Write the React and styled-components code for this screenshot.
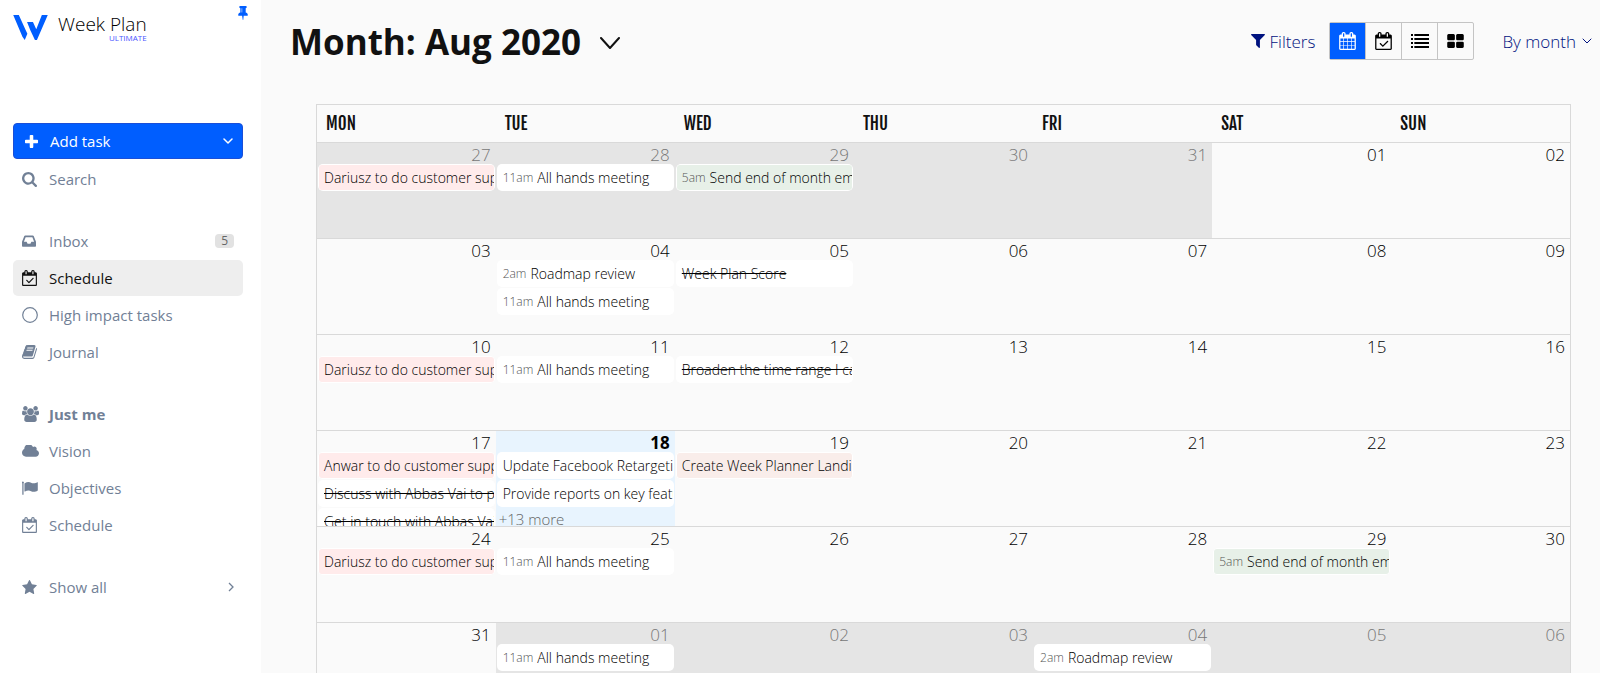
import React from "react";
import styled, { createGlobalStyle, css } from "styled-components";

const GlobalStyle = createGlobalStyle`
  *, *::before, *::after { box-sizing: border-box; }
  html, body { margin: 0; padding: 0; }
  body {
    background: #fafafa;
    color: #111;
    font-family: "Open Sans", "Noto Sans", sans-serif;
    font-size: 15px;
    font-weight: 400;
  }
  button, select { font: inherit; color: inherit; }
`;

/* ---------- icons ---------- */

const glyphs = {
  plus: { box: "192 128 1408 1408", d: "M1600 736v192q0 40-28 68t-68 28h-416v416q0 40-28 68t-68 28h-192q-40 0-68-28t-28-68v-416h-416q-40 0-68-28t-28-68v-192q0-40 28-68t68-28h416v-416q0-40 28-68t68-28h192q40 0 68 28t28 68v416h416q40 0 68 28t28 68z" },
  search: { box: "64 128 1664 1664", d: "M1216 832q0-185-131.5-316.5t-316.5-131.5-316.5 131.5-131.5 316.5 131.5 316.5 316.5 131.5 316.5-131.5 131.5-316.5zm512 832q0 52-38 90t-90 38q-54 0-90-38l-343-342q-179 124-399 124-143 0-273.5-55.5t-225-150-150-225-55.5-273.5 55.5-273.5 150-225 225-150 273.5-55.5 273.5 55.5 225 150 150 225 55.5 273.5q0 220-124 399l343 343q37 37 37 90z" },
  blocks: { box: "64 128 1664 1408", d: "M832 1024v384q0 52-38 90t-90 38h-512q-52 0-90-38t-38-90v-384q0-52 38-90t90-38h512q52 0 90 38t38 90zm0-768v384q0 52-38 90t-90 38h-512q-52 0-90-38t-38-90v-384q0-52 38-90t90-38h512q52 0 90 38t38 90zm896 768v384q0 52-38 90t-90 38h-512q-52 0-90-38t-38-90v-384q0-52 38-90t90-38h512q52 0 90 38t38 90zm0-768v384q0 52-38 90t-90 38h-512q-52 0-90-38t-38-90v-384q0-52 38-90t90-38h512q52 0 90 38t38 90z" },
  star: { box: "64 32 1664 1588", d: "M1728 647q0 22-26 48l-363 354 86 500q1 7 1 20 0 21-10.5 35.5t-30.5 14.5q-19 0-40-12l-449-236-449 236q-22 12-40 12-21 0-31.5-14.5t-10.5-35.5q0-6 2-20l86-500-364-354q-25-27-25-48 0-37 56-46l502-73 225-455q19-41 49-41t49 41l225 455 502 73q56 9 56 46z" },
  filter: { box: "192 256 1408 1408", d: "M1595 295q17 41-14 70l-493 493v742q0 42-39 59-13 5-25 5-27 0-45-19l-256-256q-19-19-19-45v-486l-493-493q-31-29-14-70 17-39 59-39h1280q42 0 59 39z" },
  pin: { box: "320 128 1152 1664", d: "M800 864v-448q0-14-9-23t-23-9-23 9-9 23v448q0 14 9 23t23 9 23-9 9-23zm672 352q0 26-19 45t-45 19h-429l-51 483q-2 12-10.5 20.5t-20.5 8.5h-1q-27 0-32-27l-76-485h-404q-26 0-45-19t-19-45q0-123 78.5-221.5t177.5-98.5v-512q-52 0-90-38t-38-90 38-90 90-38h640q52 0 90 38t38 90-38 90-90 38v512q99 0 177.5 98.5t78.5 221.5z" },
  cloud: { box: "64 256 1920 1280", d: "M1984 1152q0 159-112.5 271.5t-271.5 112.5h-1088q-185 0-316.5-131.5t-131.5-316.5q0-132 71-241.5t187-163.5q-2-28-2-43 0-212 150-362t362-150q158 0 286.5 88t187.5 230q70-62 166-62 106 0 181 75t75 181q0 75-41 138 129 30 213 134.5t84 239.5z" },
  group: { box: "64 0 1920 1792", d: "M657 896q-162 5-265 128h-134q-82 0-138-40.5t-56-118.5q0-353 124-353 6 0 43.5 21t97.5 42.5 119 21.5q67 0 133-23-5 37-5 66 0 159 90 256zm1071 637q0 120-73 189.5t-194 69.5h-874q-121 0-194-69.5t-73-189.5q0-53 3.5-103.5t14-109 26.5-108.5 43-97.5 62-81 85.5-53.5 111.5-20q10 0 43 21.5t73 48 107 48 135 21.5 135-21.5 107-48 73-48 43-21.5q61 0 111.5 20t85.5 53.5 62 81 43 97.5 26.5 108.5 14 109 3.5 103.5zm-1024-1277q0 106-75 181t-181 75-181-75-75-181 75-181 181-75 181 75 75 181zm704 384q0 159-112.5 271.5t-271.5 112.5-271.5-112.5-112.5-271.5 112.5-271.5 271.5-112.5 271.5 112.5 112.5 271.5zm576 225q0 78-56 118.5t-138 40.5h-134q-103-123-265-128 90-97 90-256 0-29-5-66 66 23 133 23 59 0 119-21.5t97.5-42.5 43.5-21q124 0 124 353zm-128-609q0 106-75 181t-181 75-181-75-75-181 75-181 181-75 181 75 75 181z" },
  calendar: { box: "64 0 1664 1792", d: "M192 1664h288v-288h-288v288zm352 0h320v-288h-320v288zm-352-352h288v-320h-288v320zm352 0h320v-320h-320v320zm-352-384h288v-288h-288v288zm736 736h320v-288h-320v288zm-384-736h320v-288h-320v288zm768 736h288v-288h-288v288zm-384-352h320v-320h-320v320zm-352-864v-288q0-13-9.5-22.5t-22.5-9.5h-64q-13 0-22.5 9.5t-9.5 22.5v288q0 13 9.5 22.5t22.5 9.5h64q13 0 22.5-9.5t9.5-22.5zm736 864h288v-320h-288v320zm-384-384h320v-288h-320v288zm384 0h288v-288h-288v288zm32-480v-288q0-13-9.5-22.5t-22.5-9.5h-64q-13 0-22.5 9.5t-9.5 22.5v288q0 13 9.5 22.5t22.5 9.5h64q13 0 22.5-9.5t9.5-22.5zm384-64v1280q0 52-38 90t-90 38h-1408q-52 0-90-38t-38-90v-1280q0-52 38-90t90-38h128v-96q0-66 47-113t113-47h64q66 0 113 47t47 113v96h384v-96q0-66 47-113t113-47h64q66 0 113 47t47 113v96h128q52 0 90 38t38 90z" },
  schedule: { box: "0 0 1664 1792", d: "M1303 964l-512 512q-10 9-23 9t-23-9l-288-288q-9-10-9-23t9-22l46-46q9-9 22-9t23 9l220 220 444-444q10-9 23-9t22 9l46 46q9 9 9 22t-9 23zm-1175 700h1408v-1024h-1408v1024zm384-1216v-288q0-14-9-23t-23-9h-64q-14 0-23 9t-9 23v288q0 14 9 23t23 9h64q14 0 23-9t9-23zm768 0v-288q0-14-9-23t-23-9h-64q-14 0-23 9t-9 23v288q0 14 9 23t23 9h64q14 0 23-9t9-23zm384-64v1280q0 52-38 90t-90 38h-1408q-52 0-90-38t-38-90v-1280q0-52 38-90t90-38h128v-96q0-66 47-113t113-47h64q66 0 113 47t47 113v96h384v-96q0-66 47-113t113-47h64q66 0 113 47t47 113v96h128q52 0 90 38t38 90z" },
  book: { box: "64 128 1670 1536", d: "M1703 478q40 57 18 129l-275 906q-19 64-76.5 107.5t-122.5 43.5h-923q-77 0-148.5-53.5t-99.5-131.5q-24-67-2-127 0-4 3-27t4-37q1-8-3-21.5t-3-19.5q2-11 8-21t16.5-23.5 16.5-23.5q23-38 45-91.5t30-91.5q3-10 .5-30t-.5-28q3-11 17-28t17-23q21-36 42-92t25-90q1-9-2.5-32t.5-28q4-13 22-30.5t22-22.5q19-26 42.5-84.5t27.5-96.5q1-8-3-25.5t-2-26.5q2-8 9-18t18-23 17-21q8-12 16.5-30.5t15-35 16-36 19.5-32 26.5-23.5 36-11.5 47.5 5.500l-1 3q38-9 51-9h761q74 0 114 56t18 130l-274 906q-36 119-71.500 153.500t-128.500 34.500h-869q-27 0-38 15-11 16-1 43 24 70 144 70h923q29 0 56-15.500t35-41.500l300-987q7-22 5-57 38 15 59 43zm-1064 2q-4 13 2 22.500t20 9.500h608q13 0 25.500-9.500t16.500-22.500l21-64q4-13-2-22.500t-20-9.500h-608q-13 0-25.500 9.500t-16.500 22.500zm-83 256q-4 13 2 22.500t20 9.500h608q13 0 25.500-9.500t16.500-22.500l21-64q4-13-2-22.500t-20-9.500h-608q-13 0-25.500 9.500t-16.500 22.500z" },
  inbox: { box: "0 0 28 24", d: "M6.5 1h15a2 2 0 0 1 1.9 1.2L28 13.5V22a1.6 1.6 0 0 1-1.6 1.6H1.6A1.6 1.6 0 0 1 0 22v-8.500L4.600 2.200A2 2 0 0 1 6.500 1zM7.300 4.500L3.800 13.500h5.400l2 4h5.600l2-4h5.400L20.700 4.500z" },
  flag: { box: "0 0 32 28", d: "M1.500 0.800a2.200 2.200 0 0 1 1.600 3.800V27a.7.700 0 0 1-.7.700H1.300a.7.700 0 0 1-.7-.7V4.600A2.200 2.200 0 0 1 1.500.800zM5.500 4.600C8 3 10.500 2 13 2c4 0 6.500 2.700 10 2.700 3 0 5.500-1.200 7.500-2.300.6-.3 1.100 0 1.100.700v15.400c0 .500-.200.800-.700 1-2 1.100-4.600 2-7.400 2-4.500 0-6.300-2.700-10.500-2.700-2.500 0-4.800 1-7 2.200-.6.300-1.100 0-1.100-.600V5.600c0-.500.200-.8.600-1z" },
  list: { box: "0 0 54 42", d: "M0 0h6v6H0zM10 0h44v6H10zM0 12h6v6H0zM10 12h44v6H10zM0 24h6v6H0zM10 24h44v6H10zM0 36h6v6H0zM10 36h44v6H10z" },
};

const Svg = styled.svg`
  display: block;
  flex: none;
  fill: currentColor;
`;

const Glyph = ({ name, w, h }) => (
  <Svg viewBox={glyphs[name].box} width={w} height={h} aria-hidden="true">
    <path d={glyphs[name].d} fillRule={name === "inbox" ? "evenodd" : "nonzero"} />
  </Svg>
);

const Chevron = ({ w, h, thick = 1.5 }) => (
  <Svg viewBox={`0 0 ${w} ${h}`} width={w} height={h} aria-hidden="true">
    <path
      d={`M1 1L${w / 2} ${h - 1}L${w - 1} 1`}
      fill="none"
      stroke="currentColor"
      strokeWidth={thick}
      strokeLinecap="round"
      strokeLinejoin="round"
    />
  </Svg>
);

const ChevronRight = () => (
  <Svg viewBox="0 0 6 10" width="6" height="10" aria-hidden="true">
    <path d="M1 1l4 4-4 4" fill="none" stroke="currentColor" strokeWidth="1.300" />
  </Svg>
);

const Ring = () => (
  <Svg viewBox="0 0 16 16" width="16" height="16" aria-hidden="true">
    <circle cx="8" cy="8" r="7.300" fill="none" stroke="currentColor" strokeWidth="1.200" />
  </Svg>
);

const LogoMark = () => (
  <Svg viewBox="0 0 105 76" width="35" height="25" aria-hidden="true">
    <path
      fill="#005eff"
      d="M0 0H17L37 44L43 57L35 76L28 66ZM42 21H60L70 43L87 0H105L72 76H66L52 46Z"
    />
  </Svg>
);

/* ---------- layout ---------- */

const Page = styled.div`
  display: flex;
  height: 100vh;
  overflow: hidden;
`;

const Sidebar = styled.aside`
  flex: 0 0 261px;
  padding: 0 18px 0 13px;
  background: #fff;
  color: #718096;
`;

const Brand = styled.div`
  display: flex;
  height: 123px;
`;

const BrandLink = styled.a`
  display: flex;
  align-items: flex-start;
  gap: 10px;
  padding-top: 15px;
  color: #000;
  text-decoration: none;
`;

const BrandText = styled.span`
  display: flex;
  flex-direction: column;
  align-items: flex-end;
  font-size: 19px;
  font-weight: 300;
  line-height: 18px;
`;

const Plan = styled.small`
  color: #4a55ff;
  font-size: 8px;
  font-weight: 400;
  line-height: 9px;
`;

const PinButton = styled.button`
  align-self: flex-start;
  margin: 6px -5px 0 auto;
  padding: 0;
  border: 0;
  background: none;
  color: #005eff;
`;

const AddTask = styled.button`
  display: flex;
  align-items: center;
  gap: 12px;
  width: 100%;
  height: 36px;
  margin-bottom: 2px;
  padding: 0 9px 0 11px;
  border: 1px solid #1a4fd8;
  border-radius: 4px;
  background: #005eff;
  color: #fff;
  text-align: left;
`;

const Grow = styled.span`
  flex: 1;
`;

const NavList = styled.ul`
  display: flex;
  flex-direction: column;
  gap: 1px;
  margin: 0 0 26px;
  padding: 0;
  list-style: none;
`;

const NavLink = styled.a`
  display: flex;
  align-items: center;
  height: 36px;
  padding: 0 9px;
  border-radius: 5px;
  color: inherit;
  text-decoration: none;
  ${(p) => p.$active && css`
    background: #eee;
    color: #111;
  `}
  ${(p) => p.$strong && css`
    font-weight: 700;
  `}
`;

const NavIcon = styled.span`
  display: flex;
  flex: 0 0 27px;
`;

const Count = styled.span`
  padding: 0 6px;
  border-radius: 4px;
  background: #e2e2e2;
  color: #666;
  font-size: 12px;
  line-height: 14px;
`;

const Main = styled.main`
  flex: 1;
  min-width: 0;
`;

const TopBar = styled.header`
  display: flex;
  align-items: center;
  height: 82px;
  padding: 0 8px 0 29px;
`;

const Title = styled.h1`
  margin: 0;
  padding-top: 2px;
  font-size: 35px;
  line-height: 48px;
  font-weight: 700;
`;

const PlainButton = styled.button`
  display: flex;
  align-items: center;
  gap: ${(p) => p.$gap || 0}px;
  padding: 0;
  border: 0;
  background: none;
  color: ${(p) => p.$color || "#111"};
  font-size: 17px;
  font-weight: 300;
`;

const TitleToggle = styled(PlainButton)`
  margin: 3px auto 0 19px;
`;

const ViewSwitch = styled.div`
  display: flex;
  margin: 0 28px 0 14px;
  border: 1px solid #c4c4c4;
  border-radius: 2px;
`;

const ViewButton = styled.button`
  display: flex;
  align-items: center;
  justify-content: center;
  width: 36px;
  height: 36px;
  padding: 0;
  border: 0;
  border-left: 1px solid #c4c4c4;
  background: ${(p) => (p.$active ? "#005eff" : "transparent")};
  color: ${(p) => (p.$active ? "#fff" : "#000")};
  &:first-child {
    width: 35px;
    border-left: 0;
  }
`;

/* ---------- calendar ---------- */

const CalendarWrap = styled.div`
  padding: 22px 29px 0 55px;
`;

const Calendar = styled.table`
  width: 100%;
  table-layout: fixed;
  border-collapse: collapse;
  border: 1px solid #d9d9d9;
`;

const Weekday = styled.th`
  height: 38px;
  padding: 0 9px;
  text-align: left;
  font-family: "Fjalla One", "Liberation Sans Narrow", "Roboto Condensed", "Open Sans Condensed", "Noto Sans Condensed", Roboto, sans-serif;
  font-size: 17px;
  font-weight: 500;
`;

const Day = styled.td`
  padding: 0;
  border-top: 1px solid #d9d9d9;
  vertical-align: top;
  background: ${(p) => (p.$today ? "#e8f4fe" : p.$outside ? "#e5e5e5" : "transparent")};
`;

const DayBody = styled.div`
  height: 95px;
  padding: 0 1px;
  overflow: hidden;
`;

const DayNumber = styled.time`
  display: block;
  height: 21px;
  padding: 0 4px;
  text-align: right;
  font-size: 17px;
  line-height: 23px;
  font-weight: ${(p) => (p.$today ? 700 : 300)};
  color: ${(p) => (p.$outside ? "#777" : "#000")};
`;

const Event = styled.div`
  height: 27px;
  margin-bottom: 1px;
  padding: 1px;
  border-radius: 5px;
  background: #fff;
`;

const tones = { red: "#ffebeb", green: "#e7f0e8", sand: "#f9edea" };

const EventText = styled.div`
  display: flex;
  gap: 4px;
  padding: 0 5px;
  overflow: hidden;
  white-space: nowrap;
  border-radius: 3px;
  background: ${(p) => tones[p.$tone] || "transparent"};
  font-size: 14px;
  font-weight: 300;
  line-height: 25px;
  color: #000;
  text-decoration: ${(p) => (p.$done ? "line-through" : "none")};
`;

const Hour = styled.span`
  color: #555;
  font-size: 12px;
`;

const More = styled.a`
  display: block;
  padding-left: 2px;
  color: #666;
  font-size: 15px;
  font-weight: 300;
  line-height: 22px;
  text-decoration: none;
`;

/* ---------- data ---------- */

const weekdays = ["Mon", "Tue", "Wed", "Thu", "Fri", "Sat", "Sun"];
const hands = { hour: "11am", text: "All hands meeting" };
const roadmap = { hour: "2am", text: "Roadmap review" };
const support = { text: "Dariusz to do customer support", tone: "red" };
const monthEmail = { hour: "5am", text: "Send end of month email", tone: "green" };

const events = {
  "2020-07-27": [support],
  "2020-07-28": [hands],
  "2020-07-29": [monthEmail],
  "2020-08-04": [roadmap, hands],
  "2020-08-05": [{ text: "Week Plan Score", done: true }],
  "2020-08-10": [support],
  "2020-08-11": [hands],
  "2020-08-12": [{ text: "Broaden the time range I can see", done: true }],
  "2020-08-17": [
    { text: "Anwar to do customer support", tone: "red" },
    { text: "Discuss with Abbas Vai to plan", done: true },
    { text: "Get in touch with Abbas Vai", done: true },
  ],
  "2020-08-18": [
    { text: "Update Facebook Retargeting" },
    { text: "Provide reports on key features" },
  ],
  "2020-08-19": [{ text: "Create Week Planner Landing page", tone: "sand" }],
  "2020-08-24": [support],
  "2020-08-25": [hands],
  "2020-08-29": [monthEmail],
  "2020-09-01": [hands],
  "2020-09-04": [roadmap],
};
const hidden = { "2020-08-18": 13 };
const today = "2020-08-18";

const start = Date.UTC(2020, 6, 27);
const weeks = Array.from({ length: 6 }, (_, w) =>
  Array.from({ length: 7 }, (_, d) =>
    new Date(start + (w * 7 + d) * 86400000).toISOString().slice(0, 10)
  )
);

const navGroups = [
  [{ icon: <Glyph name="search" w={15} h={15} />, label: "Search" }],
  [
    { icon: <Glyph name="inbox" w={14} h={12} />, label: "Inbox", count: 5 },
    { icon: <Glyph name="schedule" w={15} h={16} />, label: "Schedule", active: true },
    { icon: <Ring />, label: "High impact tasks" },
    { icon: <Glyph name="book" w={15} h={14} />, label: "Journal" },
  ],
  [
    { icon: <Glyph name="group" w={17} h={16} />, label: "Just me", strong: true },
    { icon: <Glyph name="cloud" w={17} h={12} />, label: "Vision" },
    { icon: <Glyph name="flag" w={16} h={14} />, label: "Objectives" },
    { icon: <Glyph name="schedule" w={15} h={16} />, label: "Schedule" },
  ],
  [{ icon: <Glyph name="star" w={15} h={14} />, label: "Show all", more: true }],
];

const views = [
  { label: "Calendar", icon: <Glyph name="calendar" w={17} h={18} />, active: true },
  { label: "Schedule", icon: <Glyph name="schedule" w={17} h={18} /> },
  { label: "List", icon: <Glyph name="list" w={18} h={14} /> },
  { label: "Board", icon: <Glyph name="blocks" w={17} h={14} /> },
];

const DayCell = ({ date }) => {
  const outside = date.slice(5, 7) !== "08";
  const isToday = date === today;
  return (
    <Day $outside={outside} $today={isToday}>
      <DayBody>
        <DayNumber dateTime={date} $outside={outside} $today={isToday}>
          {date.slice(8)}
        </DayNumber>
        {(events[date] || []).map((e) => (
          <Event key={e.text}>
            <EventText $tone={e.tone} $done={e.done}>
              {e.hour && <Hour>{e.hour}</Hour>}
              <span>{e.text}</span>
            </EventText>
          </Event>
        ))}
        {hidden[date] && <More href="#more">+{hidden[date]} more</More>}
      </DayBody>
    </Day>
  );
};

export default function App() {
  return (
    <Page>
      <GlobalStyle />
      <Sidebar>
        <Brand>
          <BrandLink href="#home">
            <LogoMark />
            <BrandText>
              Week Plan
              <Plan>ULTIMATE</Plan>
            </BrandText>
          </BrandLink>
          <PinButton aria-label="Pin sidebar">
            <Glyph name="pin" w={10} h={14} />
          </PinButton>
        </Brand>
        <AddTask>
          <Glyph name="plus" w={13} h={13} />
          <Grow>Add task</Grow>
          <Chevron w={10} h={6} />
        </AddTask>
        <nav>
          {navGroups.map((group, i) => (
            <NavList key={i}>
              {group.map((n) => (
                <li key={n.label}>
                  <NavLink href="#nav" $active={n.active} $strong={n.strong}>
                    <NavIcon>{n.icon}</NavIcon>
                    <Grow>{n.label}</Grow>
                    {n.count && <Count>{n.count}</Count>}
                    {n.more && <ChevronRight />}
                  </NavLink>
                </li>
              ))}
            </NavList>
          ))}
        </nav>
      </Sidebar>
      <Main>
        <TopBar>
          <Title>Month: Aug 2020</Title>
          <TitleToggle aria-label="Choose month">
            <Chevron w={20} h={12} thick={2} />
          </TitleToggle>
          <PlainButton $gap={5} $color="#00127f">
            <Glyph name="filter" w={14} h={14} />
            Filters
          </PlainButton>
          <ViewSwitch>
            {views.map((v) => (
              <ViewButton key={v.label} aria-label={v.label} $active={v.active}>
                {v.icon}
              </ViewButton>
            ))}
          </ViewSwitch>
          <PlainButton $gap={6} $color="#00127f">
            By month
            <Chevron w={10} h={6} thick={1} />
          </PlainButton>
        </TopBar>
        <CalendarWrap>
          <Calendar>
            <thead>
              <tr>
                {weekdays.map((d) => (
                  <Weekday key={d} scope="col">{d.toUpperCase()}</Weekday>
                ))}
              </tr>
            </thead>
            <tbody>
              {weeks.map((week) => (
                <tr key={week[0]}>
                  {week.map((date) => <DayCell key={date} date={date} />)}
                </tr>
              ))}
            </tbody>
          </Calendar>
        </CalendarWrap>
      </Main>
    </Page>
  );
}
